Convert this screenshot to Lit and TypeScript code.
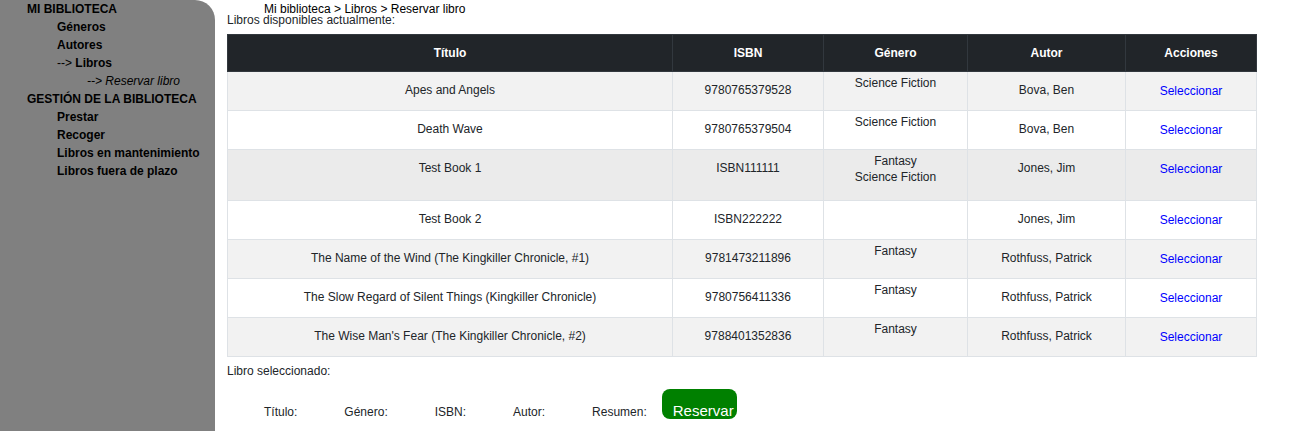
import { LitElement, html, css } from "lit";
import { customElement, state } from "lit/decorators.js";

interface Book {
  title: string;
  isbn: string;
  genres: string[];
  author: string;
}

const BOOKS: Book[] = [
  { title: "Apes and Angels", isbn: "9780765379528", genres: ["Science Fiction"], author: "Bova, Ben" },
  { title: "Death Wave", isbn: "9780765379504", genres: ["Science Fiction"], author: "Bova, Ben" },
  { title: "Test Book 1", isbn: "ISBN111111", genres: ["Fantasy", "Science Fiction"], author: "Jones, Jim" },
  { title: "Test Book 2", isbn: "ISBN222222", genres: [], author: "Jones, Jim" },
  { title: "The Name of the Wind (The Kingkiller Chronicle, #1)", isbn: "9781473211896", genres: ["Fantasy"], author: "Rothfuss, Patrick" },
  { title: "The Slow Regard of Silent Things (Kingkiller Chronicle)", isbn: "9780756411336", genres: ["Fantasy"], author: "Rothfuss, Patrick" },
  { title: "The Wise Man's Fear (The Kingkiller Chronicle, #2)", isbn: "9788401352836", genres: ["Fantasy"], author: "Rothfuss, Patrick" },
];

@customElement("library-menu")
export class LibraryMenu extends LitElement {
  static styles = css`
    :host {
      display: block;
      box-sizing: border-box;
      padding-left: 27px;
      background: #808080;
      border-top-right-radius: 20px;
      color: #000;
      white-space: nowrap;
    }
    ul {
      list-style: none;
      margin: 0;
      padding: 0;
    }
    ul ul {
      padding-left: 30px;
    }
    a {
      color: inherit;
      text-decoration: none;
      font-weight: bold;
    }
    .current {
      font-weight: normal;
      font-style: italic;
    }
  `;

  render() {
    return html`
      <nav>
        <ul>
          <li>
            <a href="#biblioteca">MI BIBLIOTECA</a>
            <ul>
              <li><a href="#generos">Géneros</a></li>
              <li><a href="#autores">Autores</a></li>
              <li>
                --&gt; <a href="#libros">Libros</a>
                <ul>
                  <li class="current">--&gt; <a class="current" href="#reservar">Reservar libro</a></li>
                </ul>
              </li>
            </ul>
          </li>
          <li>
            <a href="#gestion">GESTIÓN DE LA BIBLIOTECA</a>
            <ul>
              <li><a href="#prestar">Prestar</a></li>
              <li><a href="#recoger">Recoger</a></li>
              <li><a href="#mantenimiento">Libros en mantenimiento</a></li>
              <li><a href="#plazo">Libros fuera de plazo</a></li>
            </ul>
          </li>
        </ul>
      </nav>
    `;
  }
}

@customElement("app-root")
export class AppRoot extends LitElement {
  @state() private highlighted = "ISBN111111";

  static styles = css`
    :host {
      display: flex;
      min-height: 100vh;
      background: #fff;
      color: #212529;
      font: 12px/18px "Liberation Sans", Arial, sans-serif;
    }
    library-menu {
      flex: 0 0 215px;
    }
    main {
      flex: 1;
      min-width: 0;
      padding: 3px 32px 0 12px;
    }
    .crumbs {
      padding-left: 37px;
      line-height: 12px;
      color: #000;
    }
    .crumbs a {
      color: inherit;
      text-decoration: none;
    }
    .intro {
      margin: 0 0 8px;
      line-height: 11px;
    }
    table {
      width: 100%;
      table-layout: fixed;
      border-collapse: collapse;
      text-align: center;
    }
    .col-isbn {
      width: 151px;
    }
    .col-genre {
      width: 144px;
    }
    .col-author {
      width: 158px;
    }
    .col-actions {
      width: 131px;
    }
    th {
      padding: 9px 0;
      background: #212529;
      border: 1px solid #32383e;
      color: #fff;
    }
    td {
      padding: 9px 0 11px;
      border: 1px solid #dee2e6;
      vertical-align: top;
    }
    tbody tr:nth-child(odd) {
      background: #f2f2f2;
    }
    tbody tr.highlighted {
      background: #ebebeb;
    }
    td.genres {
      padding: 3px 0;
    }
    .genres ul {
      list-style: none;
      margin: 0 0 12px;
      padding: 0;
      line-height: 16px;
    }
    td.actions {
      padding: 10px 0;
    }
    .actions a {
      color: #00f;
      text-decoration: none;
    }
    .selected {
      margin: 5px 0 9px;
    }
    .fields {
      display: flex;
      align-items: flex-end;
      padding-left: 37px;
    }
    .field {
      padding: 0 47px 0 0;
      line-height: 14px;
    }
    .field:nth-last-child(2) {
      padding-right: 15px;
    }
    button {
      width: 75px;
      height: 30px;
      padding: 14px 0 0 11px;
      border: 0;
      border-radius: 8px;
      background: green;
      color: #fff;
      font: 15px/16px "Liberation Sans", Arial, sans-serif;
      text-align: left;
    }
  `;

  private select(event: Event, book: Book) {
    event.preventDefault();
    this.highlighted = book.isbn;
  }

  private renderRow(book: Book) {
    return html`
      <tr class=${book.isbn === this.highlighted ? "highlighted" : ""}>
        <td>${book.title}</td>
        <td>${book.isbn}</td>
        <td class="genres">
          ${book.genres.length ? html`<ul>${book.genres.map((g) => html`<li>${g}</li>`)}</ul>` : ""}
        </td>
        <td>${book.author}</td>
        <td class="actions">
          <a href="#seleccionar" @click=${(e: Event) => this.select(e, book)}>Seleccionar</a>
        </td>
      </tr>
    `;
  }

  render() {
    return html`
      <library-menu></library-menu>
      <main>
        <nav class="crumbs">
          <a href="#biblioteca">Mi biblioteca</a> &gt; <a href="#libros">Libros</a> &gt;
          <a href="#reservar">Reservar libro</a>
        </nav>
        <p class="intro">Libros disponibles actualmente:</p>
        <table>
          <colgroup>
            <col />
            <col class="col-isbn" />
            <col class="col-genre" />
            <col class="col-author" />
            <col class="col-actions" />
          </colgroup>
          <thead>
            <tr>
              <th scope="col">Título</th>
              <th scope="col">ISBN</th>
              <th scope="col">Género</th>
              <th scope="col">Autor</th>
              <th scope="col">Acciones</th>
            </tr>
          </thead>
          <tbody>
            ${BOOKS.map((book) => this.renderRow(book))}
          </tbody>
        </table>
        <p class="selected">Libro seleccionado:</p>
        <div class="fields">
          ${["Título:", "Género:", "ISBN:", "Autor:", "Resumen:"].map(
            (label) => html`<span class="field">${label}</span>`,
          )}
          <button type="button">Reservar</button>
        </div>
      </main>
    `;
  }
}
